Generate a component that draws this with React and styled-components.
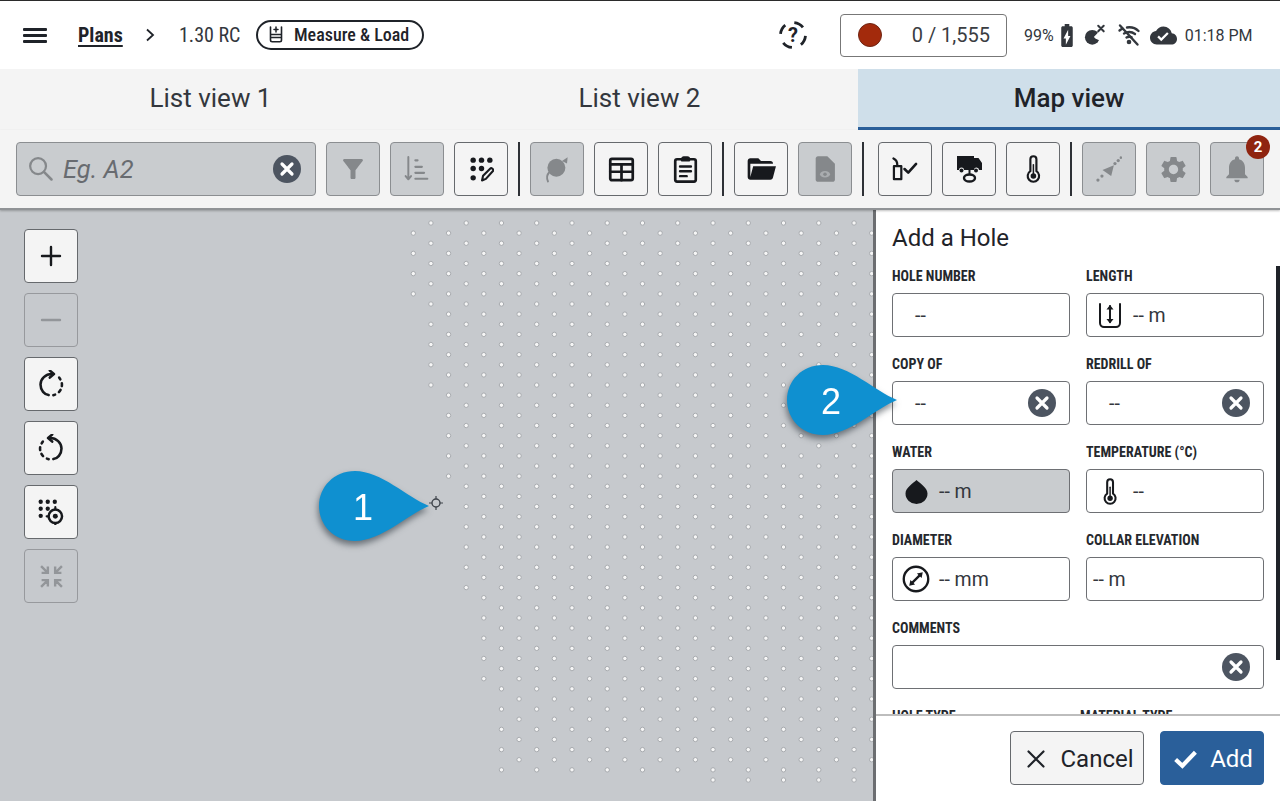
import React from 'react'
import styled, { createGlobalStyle } from 'styled-components'

const INK = '#1f2329'

const GlobalStyle = createGlobalStyle`
  html, body { margin: 0; padding: 0; background: #fff; }
  body { font-family: Roboto, "Liberation Sans", sans-serif; color: ${INK}; }
  * { box-sizing: border-box; }
`

// map dots: first column index for every row, top row first
const ROW_STARTS = [
  1, 0, 1, 0, 1, 0, 1, 0, 1, 2, 1, 2, 1, 2, 1, 2, 1, 2, 3, 2, 3, 2, 3, 2, 3, 2, 3, 4,
  3, 4, 3, 4, 3, 4, 3, 4, 3, 4, 5, 4, 5, 4, 5, 4, 5, 4, 5, 6, 5, 6, 5, 6, 5, 6, 5, 17,
]

const dots = []
ROW_STARTS.forEach((start, row) => {
  for (let k = start; 413.3 + k * 17.63 < 880; k += 2) {
    dots.push([413.3 + k * 17.63, 13 + row * 10.127])
  }
})

const Root = styled.div`
  position: relative;
  width: 1280px;
  height: 801px;
  overflow: hidden;
  display: flex;
  flex-direction: column;
  background: #fff;
`

const TopBar = styled.header`
  height: 69px;
  flex: none;
  display: flex;
  align-items: center;
  border-top: 1px solid #2b2b2b;
  padding-left: 23px;
`

const Menu = styled.div`
  width: 24px;
  display: flex;
  flex-direction: column;
  gap: 3px;
  span { display: block; height: 3px; background: ${INK}; border-radius: 1px; }
`

const Narrow = styled.span`
  display: inline-block;
  font-stretch: 75%;
  white-space: nowrap;
`

const Crumb = styled(Narrow)`
  margin-left: 31px;
  width: 45px;
  font-size: 20px;
  font-weight: 700;
  text-decoration: underline;
  text-underline-offset: 3px;
`

const Chevron = styled.svg`
  margin-left: 22px;
  width: 10px;
  height: 14px;
`

const Version = styled(Narrow)`
  margin-left: 24px;
  width: 77px;
  font-size: 20px;
  color: #33373d;
`

const Pill = styled.div`
  width: 168px;
  height: 30px;
  display: flex;
  align-items: center;
  gap: 11px;
  padding: 0 0 2px 11px;
  border: 2px solid ${INK};
  border-radius: 15px;
  font-size: 18px;
  font-weight: 500;
`

const HelpIcon = styled.svg`
  margin-left: 355px;
  width: 28px;
  height: 28px;
  flex: none;
`

const Counter = styled.div`
  margin-left: 33px;
  width: 167px;
  height: 43px;
  display: flex;
  align-items: center;
  justify-content: space-between;
  padding: 0 16px 0 17px;
  border: 1.5px solid #777;
  border-radius: 4px;
  font-size: 20px;
  color: #3a3d42;
`

const RecordDot = styled.span`
  width: 24px;
  height: 24px;
  border-radius: 50%;
  background: #a32a0c;
  border: 1px solid #6e2413;
`

const Status = styled.div`
  margin-left: 17px;
  display: flex;
  align-items: center;
  font-size: 16px;
  color: #33373d;
`

const StatusIcon = styled.span`
  display: flex;
  margin-left: ${(p) => p.$gap}px;
`

const Tabs = styled.nav`
  height: 61px;
  flex: none;
  display: grid;
  grid-template-columns: 421px 437px 422px;
  background: #f4f4f4;
`

const Tab = styled.div`
  display: flex;
  align-items: center;
  justify-content: center;
  font-size: 26px;
  color: #33373d;
  font-weight: ${(p) => (p.$active ? 500 : 400)};
  background: ${(p) => (p.$active ? '#cfdfea' : 'transparent')};
  border-bottom: 3px solid ${(p) => (p.$active ? '#2a5f9a' : 'transparent')};
  ${(p) => p.$active && `color: ${INK};`}
`

const Toolbar = styled.div`
  height: 80px;
  flex: none;
  display: flex;
  align-items: flex-start;
  gap: 10px;
  padding: 12px 0 0 16px;
  background: #f4f4f4;
  border-bottom: 2px solid #909396;
  box-shadow: 0 1px 2px rgba(0, 0, 0, 0.25);
  position: relative;
  z-index: 1;
`

const Search = styled.div`
  width: 300px;
  height: 54px;
  display: flex;
  align-items: center;
  padding-left: 10px;
  background: #c9cccf;
  border: 1.5px solid #8b8e91;
  border-radius: 4px;
  color: #85888b;
`

const SearchText = styled.span`
  margin-left: 8px;
  font-size: 25.5px;
  font-style: italic;
  color: #686b70;
`

const Button = styled.div`
  width: 54px;
  height: 54px;
  flex: none;
  display: flex;
  align-items: center;
  justify-content: center;
  border-radius: 4px;
  background: ${(p) => (p.$off ? '#c9cccf' : '#f4f4f4')};
  border: 1.5px solid ${(p) => (p.$off ? '#8b8e91' : '#66696d')};
  color: ${(p) => (p.$off ? '#85888b' : '#17191d')};
  position: relative;
`

const MapButton = styled(Button)`
  background: ${(p) => (p.$off ? '#c6c9cd' : '#f4f4f4')};
  border-color: ${(p) => (p.$off ? '#97999d' : '#66696d')};
  color: ${(p) => (p.$off ? '#93969a' : '#17191d')};
`

const Divider = styled.span`
  width: 2px;
  height: 54px;
  flex: none;
  background: #2e3136;
  margin-right: ${(p) => (p.$wide ? 4 : 0)}px;
`

const Badge = styled.span`
  position: absolute;
  top: -8px;
  right: -7px;
  width: 24px;
  height: 24px;
  border-radius: 50%;
  background: #8f2410;
  color: #fff;
  font-size: 15px;
  font-weight: 700;
  display: flex;
  align-items: center;
  justify-content: center;
`

const Main = styled.main`
  flex: 1;
  display: flex;
  min-height: 0;
`

const MapArea = styled.section`
  position: relative;
  width: 873px;
  flex: none;
  overflow: hidden;
  background: #c6c9cd;
  padding: 19px 0 0 24px;
`

const DotLayer = styled.svg`
  position: absolute;
  left: 0;
  top: 0;
`

const MapControls = styled.div`
  position: relative;
  display: flex;
  flex-direction: column;
  gap: 10px;
`

const Marker = styled.svg`
  position: absolute;
  left: 429px;
  top: 286px;
`

const Panel = styled.aside`
  flex: 1;
  position: relative;
  display: flex;
  flex-direction: column;
  min-width: 0;
  border-left: 3px solid #6c6e71;
  background: #fff;
`

const Scrollbar = styled.span`
  position: absolute;
  right: 0;
  top: 56px;
  width: 4px;
  height: 394px;
  background: #1f2329;
`

const FormArea = styled.div`
  flex: 1;
  min-height: 0;
  overflow: hidden;
  padding: 12px 16px 0;
`

const Title = styled.h2`
  margin: 0 0 12px;
  height: 32px;
  line-height: 32px;
  font-size: 24px;
  font-weight: 400;
  color: ${INK};
`

const FormGrid = styled.div`
  display: grid;
  grid-template-columns: 178px 178px;
  column-gap: 16px;
  row-gap: 17px;
`

const Field = styled.div`
  grid-column: ${(p) => (p.$full ? '1 / -1' : 'auto')};
  min-width: 0;
`

const Label = styled.div`
  height: 20px;
  line-height: 21px;
  margin: 0 0 7px ${(p) => p.$shift || 0}px;
  font-size: 14px;
  font-weight: 700;
  font-stretch: 75%;
  white-space: nowrap;
  color: #25282d;
`

const InputBox = styled.div`
  height: 44px;
  display: flex;
  align-items: center;
  margin-top: ${(p) => (p.$low ? 2 : 0)}px;
  padding-left: ${(p) => p.$indent || 0}px;
  background: ${(p) => (p.$filled ? '#c9cccf' : '#fff')};
  border: 1.5px solid #6e7074;
  border-radius: 4px;
  font-size: 19.5px;
  color: #33373d;
`

const IconSlot = styled.span`
  width: 46px;
  flex: none;
  display: flex;
  justify-content: center;
  color: #17191d;
`

const ClearSlot = styled.span`
  display: flex;
  margin-left: auto;
  margin-right: ${(p) => p.$right}px;
`

const Footer = styled.footer`
  height: 87px;
  flex: none;
  display: flex;
  justify-content: flex-end;
  gap: 16px;
  padding: 15px 16px 0;
  background: #fff;
  border-top: 2px solid #bdbdbd;
`

const FooterButton = styled.div`
  height: 54px;
  width: ${(p) => p.$width}px;
  display: flex;
  align-items: center;
  justify-content: center;
  gap: ${(p) => (p.$primary ? 12 : 14)}px;
  padding: 1px 0 0 ${(p) => (p.$primary ? 2 : 6)}px;
  font-size: 24px;
  border-radius: 4px;
  color: ${(p) => (p.$primary ? '#fff' : INK)};
  background: ${(p) => (p.$primary ? '#2a5f9a' : '#f4f4f4')};
  border: 1.5px solid ${(p) => (p.$primary ? '#2a5f9a' : '#66696d')};
`

const Pin = styled.div`
  position: absolute;
  left: ${(p) => p.$x}px;
  top: ${(p) => p.$y}px;
  width: 110px;
  height: 70px;
  filter: drop-shadow(-1px 4px 3px rgba(30, 40, 50, 0.55));
  z-index: 3;
  svg { display: block; }
`

const PinNumber = styled.span`
  position: absolute;
  left: 0;
  top: 0;
  width: 88px;
  line-height: 74px;
  text-align: center;
  font-family: "Liberation Sans", Arial, sans-serif;
  font-size: 36px;
  color: #fff;
`

const Ic = ({ size = 28, w, h, vb = '0 0 24 24', children }) => (
  <svg width={w || size} height={h || size} viewBox={vb} fill="currentColor" style={{ display: 'block', flex: 'none' }}>
    {children}
  </svg>
)

const line = { fill: 'none', stroke: 'currentColor', strokeLinecap: 'round', strokeLinejoin: 'round' }

const ClearIcon = ({ size = 28 }) => (
  <svg width={size} height={size} viewBox="0 0 28 28" style={{ display: 'block', flex: 'none' }}>
    <circle cx="14" cy="14" r="14" fill="#4d5561" />
    <path d="M9 9l10 10M19 9L9 19" stroke="#fff" strokeWidth="3.2" strokeLinecap="round" />
  </svg>
)

const SearchIcon = () => (
  <Ic size={28}>
    <circle cx="9.5" cy="9.5" r="6.8" {...line} strokeWidth="1.9" />
    <path d="M14.5 14.5l6.5 6.5" {...line} strokeWidth="2.2" />
  </Ic>
)

const FunnelIcon = () => (
  <Ic size={30}>
    <path d="M4.25 5.61C6.27 8.2 10 13 10 13v6c0 .55.45 1 1 1h2c.55 0 1-.45 1-1v-6s3.72-4.8 5.74-7.39c.51-.66.04-1.61-.79-1.61H5.04c-.83 0-1.3.95-.79 1.61z" />
  </Ic>
)

const SortIcon = () => (
  <Ic size={26}>
    <path d="M4 1v20M1.5 18.5L4 21.5l2.5-3" {...line} strokeWidth="1.8" />
    <path d="M10.5 4h2M10.5 10h6M10.5 15.500h8M10.5 21h11" {...line} strokeWidth="2" />
  </Ic>
)

const DotGrid = () => {
  const all = [[4, 3], [12, 3], [20, 3], [4, 11], [12, 11], [4, 20]]
  return all.map(([x, y]) => <circle key={x + '-' + y} cx={x} cy={y} r="2.6" />)
}

const DotsPencilIcon = () => (
  <Ic size={25}>
    <DotGrid />
    <path d="M12.5 22.5l1-4.500 7-7c1-1 3.5 1 2.5 2.500l-6.800 7.500z" {...line} strokeWidth="2" />
  </Ic>
)

const ReelIcon = () => (
  <Ic size={30}>
    <circle cx="11.5" cy="11" r="7.2" />
    <path d="M16 5.5l4.500-3-.5 5z" />
    <path d="M5.500 15c-1.800 2-1.800 4.500-.7 7" {...line} strokeWidth="1.500" />
  </Ic>
)

const TableIcon = () => (
  <Ic size={27}>
    <rect x="2" y="2.5" width="20" height="19" rx="1.5" {...line} strokeWidth="2.4" />
    <path d="M2 7.500h20M2 14h20M12 7.500v14" {...line} strokeWidth="2.4" />
  </Ic>
)

const ClipboardIcon = () => (
  <Ic size={29}>
    <rect x="3.5" y="3.5" width="17" height="18.5" rx="1.5" {...line} strokeWidth="2.2" />
    <path d="M9 4.500V3.500c0-.8.8-1.500 1.500-1.500h3c.8 0 1.500.7 1.500 1.500v1z" {...line} strokeWidth="1.8" />
    <path d="M7.500 9.500h9M7.500 13.500h9M7.500 17.500h5.500" {...line} strokeWidth="2" />
  </Ic>
)

const FolderIcon = () => (
  <Ic size={32}>
    <path d="M19 20H4c-1.110 0-2-.9-2-2V6c0-1.110.89-2 2-2h6l2 2h7a2 2 0 0 1 2 2H4v10l2.140-8h17.070l-2.280 8.500c-.23.87-1.010 1.500-1.930 1.500z" />
  </Ic>
)

const DocEyeIcon = () => (
  <Ic size={28}>
    <path d="M6 1h8l6.500 6.500V21c0 1.100-.9 2-2 2H6c-1.100 0-2-.9-2-2V3c0-1.100.9-2 2-2z" />
    <ellipse cx="12" cy="16.500" rx="4.300" ry="2.700" fill="#a9acaf" />
    <circle cx="12" cy="16.500" r="1.500" />
  </Ic>
)

const SampleIcon = () => (
  <Ic w={26} h={24} vb="0 0 28 26">
    <path d="M2 10h8v14H2zM5.500 9.500C6 6 4.500 3 1.500 1.500" {...line} strokeWidth="2.400" />
    <path d="M13.500 13l4 4 8.500-9.500" {...line} strokeWidth="2.800" />
  </Ic>
)

const TruckIcon = () => (
  <Ic w={27} h={28} vb="0 0 27 28">
    <path d="M1 1h17v2h4.500l3.500 5v7h-3a2.500 2.500 0 0 0-5 0H8a2.500 2.500 0 0 0-5 0H1z" />
    <circle cx="5.500" cy="15.500" r="2" />
    <circle cx="20" cy="15.500" r="2" />
    <path d="M13.500 15v4" {...line} strokeWidth="2" />
    <ellipse cx="13.500" cy="23" rx="5.500" ry="3.500" {...line} strokeWidth="2.400" />
  </Ic>
)

const ThermoIcon = ({ size = 28 }) => (
  <Ic w={size * 0.6} h={size} vb="0 0 14 26">
    <path d="M4.200 15V4a2.800 2.800 0 0 1 5.600 0v11a5.300 5.300 0 1 1-5.600 0z" {...line} strokeWidth="2" />
    <circle cx="7" cy="19.500" r="2.600" />
    <path d="M7 19V9" {...line} strokeWidth="1.400" />
  </Ic>
)

const RouteIcon = () => (
  <Ic size={26}>
    <circle cx="1.800" cy="22.200" r="1.500" />
    <circle cx="5.500" cy="18.500" r="1.500" />
    <circle cx="17.500" cy="7" r="1.500" />
    <circle cx="20.500" cy="4.200" r="1.500" />
    <circle cx="23" cy="1.500" r="1.200" />
    <path d="M6 13l10.500-4.500-2.500 10z" />
  </Ic>
)

const GearIcon = () => (
  <Ic size={31}>
    <path d="M19.140 12.940c.04-.3.06-.61.06-.94 0-.32-.02-.64-.07-.94l2.030-1.580c.18-.14.23-.41.12-.61l-1.920-3.320c-.12-.22-.37-.29-.59-.22l-2.390.96c-.5-.38-1.030-.7-1.620-.94l-.36-2.540c-.04-.24-.24-.41-.48-.41h-3.840c-.24 0-.43.17-.47.41l-.36 2.540c-.59.24-1.130.57-1.620.94l-2.390-.96c-.22-.08-.47 0-.59.22L2.740 8.870c-.12.21-.08.47.12.61l2.030 1.580c-.05.3-.09.63-.09.94s.02.64.07.94l-2.030 1.580c-.18.14-.23.41-.12.61l1.920 3.320c.12.22.37.29.59.22l2.390-.96c.5.38 1.030.7 1.620.94l.36 2.540c.05.24.24.41.48.41h3.840c.24 0 .44-.17.47-.41l.36-2.540c.59-.24 1.130-.56 1.620-.94l2.390.96c.22.08.47 0 .59-.22l1.920-3.320c.12-.22.07-.47-.12-.61l-2.010-1.580zM12 15.600c-1.980 0-3.600-1.620-3.600-3.600s1.620-3.600 3.600-3.600 3.600 1.620 3.600 3.600-1.620 3.600-3.600 3.600z" />
  </Ic>
)

const BellIcon = () => (
  <Ic size={32}>
    <path d="M12 22c1.100 0 2-.9 2-2h-4c0 1.100.89 2 2 2zm6-6v-5c0-3.070-1.640-5.640-4.500-6.320V4c0-.83-.67-1.500-1.500-1.500s-1.500.67-1.500 1.500v.68C7.630 5.360 6 7.920 6 11v5l-2 2v1h16v-1l-2-2z" />
  </Ic>
)

const PlusIcon = () => (
  <Ic size={24}>
    <path d="M12 3v18M3 12h18" {...line} strokeWidth="2.4" />
  </Ic>
)

const MinusIcon = () => (
  <Ic size={24}>
    <path d="M3 12h18" {...line} strokeWidth="2.4" />
  </Ic>
)

const RotateIcon = ({ flip }) => (
  <Ic size={28}>
    <g transform={flip ? 'matrix(-1 0 0 1 24 0)' : undefined}>
      <path d="M12.500 3.500C7.500 3.500 3 7.500 3 12.500s3.500 8.500 7 9" {...line} strokeWidth="2.2" />
      <path d="M11 0.500l3.500 3-3.500 3" {...line} strokeWidth="2.2" />
      <path d="M14 21.600l1.500-.5M18.800 19a9 9 0 0 0 1.400-2M21.300 13.800a9 9 0 0 0 0-2.500M20 8a9 9 0 0 0-1-1.500" {...line} strokeWidth="2.2" />
    </g>
  </Ic>
)

const DotsTargetIcon = () => (
  <Ic size={26}>
    <circle cx="2.500" cy="2.500" r="2" />
    <circle cx="9" cy="2.500" r="2" />
    <circle cx="15.500" cy="2.500" r="2" />
    <circle cx="2.500" cy="9" r="2" />
    <circle cx="9" cy="9" r="2" />
    <circle cx="2.500" cy="15.500" r="2" />
    <circle cx="16" cy="16" r="6.200" {...line} strokeWidth="2.300" />
    <circle cx="16" cy="16" r="2.300" />
    <path d="M16 7.500v2M16 22.500v1.500M8 16h1.500" {...line} strokeWidth="2" />
  </Ic>
)

const CompressIcon = () => (
  <Ic size={25}>
    <path d="M2 2l6 6M2.500 8.500h6v-6M22 2l-6 6M21.500 8.500h-6v-6M2 22l6-6M2.500 15.500h6v6M22 22l-6-6M21.500 15.500h-6v6" fill="none" stroke="currentColor" strokeWidth="2.300" />
  </Ic>
)

const JarIcon = () => (
  <Ic w={14} h={18} vb="0 0 14 18">
    <path d="M1.500 2v13c0 1 .7 1.700 1.700 1.700h7.600c1 0 1.700-.7 1.700-1.700V2" {...line} strokeWidth="1.600" />
    <path d="M2 9.500h10M2 12.500h10M7 2v5M5 4.500h4" {...line} strokeWidth="1.500" />
  </Ic>
)

const BatteryIcon = () => (
  <Ic w={12} h={23} vb="7 2 10 20">
    <path d="M15.670 4H14V2h-4v2H8.330C7.600 4 7 4.600 7 5.330v15.330C7 21.400 7.600 22 8.330 22h7.330c.74 0 1.340-.6 1.340-1.330V5.330C17 4.600 16.400 4 15.670 4zM11 20v-5.500H9L13 7v5.500h2L11 20z" />
  </Ic>
)

const DishIcon = () => (
  <Ic size={22}>
    <circle cx="9" cy="14.500" r="8" />
    <path d="M9 14.500l8-8 6 0v14z" fill="#fff" />
    <path d="M9 14.500L14 9.500" {...line} strokeWidth="1.800" />
    <path d="M9.500 13.500c1.500 2.500 3 4 5 5.500" {...line} strokeWidth="1.500" />
    <path d="M15.500 2l6 6M21.500 2l-6 6" {...line} strokeWidth="2.200" />
  </Ic>
)

const WifiOffIcon = () => (
  <Ic size={24}>
    <path d="M7 10.500c3.500-1.800 7.800-1.800 11 .5M9.500 14.500c1.500-.9 3.500-1 5-.3M2.500 7.500c1-.8 2-1.400 3-1.900M10 4.500c4-.6 8.500.6 11.500 3.500" {...line} strokeWidth="2.400" />
    <circle cx="12" cy="19" r="2.300" />
    <path d="M3 2.500l17.500 19" {...line} strokeWidth="2.400" />
  </Ic>
)

const CloudIcon = () => (
  <Ic size={27}>
    <path d="M19.350 10.040C18.670 6.590 15.640 4 12 4 9.110 4 6.600 5.640 5.350 8.040 2.340 8.360 0 10.910 0 14c0 3.310 2.690 6 6 6h13c2.760 0 5-2.240 5-5 0-2.640-2.050-4.780-4.650-4.960zM10 17l-3.500-3.500 1.410-1.410L10 14.170 15.180 9l1.410 1.410L10 17z" />
  </Ic>
)

const LengthIcon = () => (
  <Ic w={24} h={27} vb="0 0 24 27">
    <path d="M2 2v19c0 2.500 2 4 4 4h12c2 0 4-1.500 4-4V2" {...line} strokeWidth="2" />
    <path d="M12 4v16" {...line} strokeWidth="2" />
    <path d="M8.500 7.500L12 3l3.500 4.500zM8.500 17L12 21.500l3.500-4.500z" />
  </Ic>
)

const DropIcon = () => (
  <Ic w={23} h={25} vb="0 0 23 25">
    <path d="M11.500 1c3 3 11 7.500 11 13.500a11 10.500 0 0 1-22 0C.5 8.500 8.500 4 11.500 1z" />
  </Ic>
)

const DiameterIcon = () => (
  <Ic size={28}>
    <circle cx="12" cy="12" r="10.500" {...line} strokeWidth="2" />
    <path d="M8 16l8-8" {...line} strokeWidth="2" />
    <path d="M6.200 17.800l1-5 4 4zM17.800 6.200l-5 1 4 4z" />
  </Ic>
)

const PinShape = () => (
  <svg width="110" height="70" viewBox="0 0 110 70">
    <path d="M110 35C88 26 62 0 36 0 15 0 0 16 0 35s15 35 36 35c26 0 52-26 74-35z" fill="#0f90d0" />
  </svg>
)

const Input = ({ icon, value, indent, clear, filled, low }) => (
  <InputBox $indent={indent} $filled={filled} $low={low}>
    {icon && <IconSlot>{icon}</IconSlot>}
    <span>{value}</span>
    {clear && <ClearSlot $right={13}><ClearIcon /></ClearSlot>}
  </InputBox>
)

const App = () => {
  return (
    <Root>
      <GlobalStyle />
      <TopBar>
        <Menu><span /><span /><span /></Menu>
        <Crumb>Plans</Crumb>
        <Chevron viewBox="0 0 10 14"><path d="M2 1.500L8 7l-6 5.500" fill="none" stroke={INK} strokeWidth="1.8" /></Chevron>
        <Version>1.30 RC</Version>
        <Pill><JarIcon /><Narrow>Measure &amp; Load</Narrow></Pill>
        <HelpIcon viewBox="0 0 28 28">
          <circle cx="14" cy="14" r="12.500" fill="none" stroke={INK} strokeWidth="2.800" strokeDasharray="10 9.630" strokeDashoffset="-1" />
          <text x="14" y="21" textAnchor="middle" fontSize="20" fontWeight="700" fontFamily="Roboto, sans-serif" fill={INK}>?</text>
        </HelpIcon>
        <Counter><RecordDot /><span>0 / 1,555</span></Counter>
        <Status>
          <span>99%</span>
          <StatusIcon $gap={7}><BatteryIcon /></StatusIcon>
          <StatusIcon $gap={11}><DishIcon /></StatusIcon>
          <StatusIcon $gap={11}><WifiOffIcon /></StatusIcon>
          <StatusIcon $gap={9}><CloudIcon /></StatusIcon>
          <StatusIcon $gap={8}>01:18 PM</StatusIcon>
        </Status>
      </TopBar>

      <Tabs>
        <Tab>List view 1</Tab>
        <Tab>List view 2</Tab>
        <Tab $active>Map view</Tab>
      </Tabs>

      <Toolbar>
        <Search>
          <SearchIcon />
          <SearchText>Eg. A2</SearchText>
          <ClearSlot $right={14}><ClearIcon /></ClearSlot>
        </Search>
        <Button $off><FunnelIcon /></Button>
        <Button $off><SortIcon /></Button>
        <Button><DotsPencilIcon /></Button>
        <Divider />
        <Button $off><ReelIcon /></Button>
        <Button><TableIcon /></Button>
        <Button><ClipboardIcon /></Button>
        <Divider />
        <Button><FolderIcon /></Button>
        <Button $off><DocEyeIcon /></Button>
        <Divider $wide />
        <Button><SampleIcon /></Button>
        <Button><TruckIcon /></Button>
        <Button><ThermoIcon /></Button>
        <Divider />
        <Button $off><RouteIcon /></Button>
        <Button $off><GearIcon /></Button>
        <Button $off><BellIcon /><Badge>2</Badge></Button>
      </Toolbar>

      <Main>
        <MapArea>
          <DotLayer width="873" height="591" viewBox="0 0 873 591">
            {dots.map(([x, y]) => (
              <circle key={x + '-' + y} cx={x} cy={y} r="2.2" fill="#f6f6f6" stroke="#a9acb0" strokeWidth="1" />
            ))}
          </DotLayer>
          <Marker width="14" height="14" viewBox="0 0 14 14">
            <circle cx="7" cy="7" r="4" fill="none" stroke="#3f444b" strokeWidth="1.4" />
            <path d="M7 0v3M7 11v3M0 7h3M11 7h3" stroke="#3f444b" strokeWidth="1.2" />
          </Marker>
          <MapControls>
            <MapButton><PlusIcon /></MapButton>
            <MapButton $off><MinusIcon /></MapButton>
            <MapButton><RotateIcon /></MapButton>
            <MapButton><RotateIcon flip /></MapButton>
            <MapButton><DotsTargetIcon /></MapButton>
            <MapButton $off><CompressIcon /></MapButton>
          </MapControls>
        </MapArea>

        <Panel>
          <Scrollbar />
          <FormArea>
            <Title>Add a Hole</Title>
            <FormGrid>
              <Field><Label>HOLE NUMBER</Label><Input value="--" indent={22} /></Field>
              <Field><Label>LENGTH</Label><Input value="-- m" icon={<LengthIcon />} /></Field>
              <Field><Label>COPY OF</Label><Input value="--" indent={22} clear /></Field>
              <Field><Label>REDRILL OF</Label><Input value="--" indent={22} clear /></Field>
              <Field><Label>WATER</Label><Input value="-- m" icon={<DropIcon />} filled /></Field>
              <Field><Label>TEMPERATURE (°C)</Label><Input value="--" icon={<ThermoIcon size={27} />} /></Field>
              <Field><Label>DIAMETER</Label><Input value="-- mm" icon={<DiameterIcon />} /></Field>
              <Field><Label>COLLAR ELEVATION</Label><Input value="-- m" indent={6} low /></Field>
              <Field $full><Label>COMMENTS</Label><Input value="" clear /></Field>
              <Field><Label>HOLE TYPE</Label></Field>
              <Field><Label $shift={-6}>MATERIAL TYPE</Label></Field>
            </FormGrid>
          </FormArea>
          <Footer>
            <FooterButton $width={134}>
              <Ic size={20}><path d="M3 3l18 18M21 3L3 21" {...line} strokeWidth="2.6" /></Ic>
              Cancel
            </FooterButton>
            <FooterButton $width={104} $primary>
              <Ic size={25}><path d="M2.500 13l6.500 6L21.500 6" {...line} strokeWidth="4" strokeLinecap="butt" strokeLinejoin="miter" /></Ic>
              Add
            </FooterButton>
          </Footer>
        </Panel>
      </Main>

      <Pin $x={319} $y={471}><PinShape /><PinNumber>1</PinNumber></Pin>
      <Pin $x={787} $y={365}><PinShape /><PinNumber>2</PinNumber></Pin>
    </Root>
  )
}

export default App
